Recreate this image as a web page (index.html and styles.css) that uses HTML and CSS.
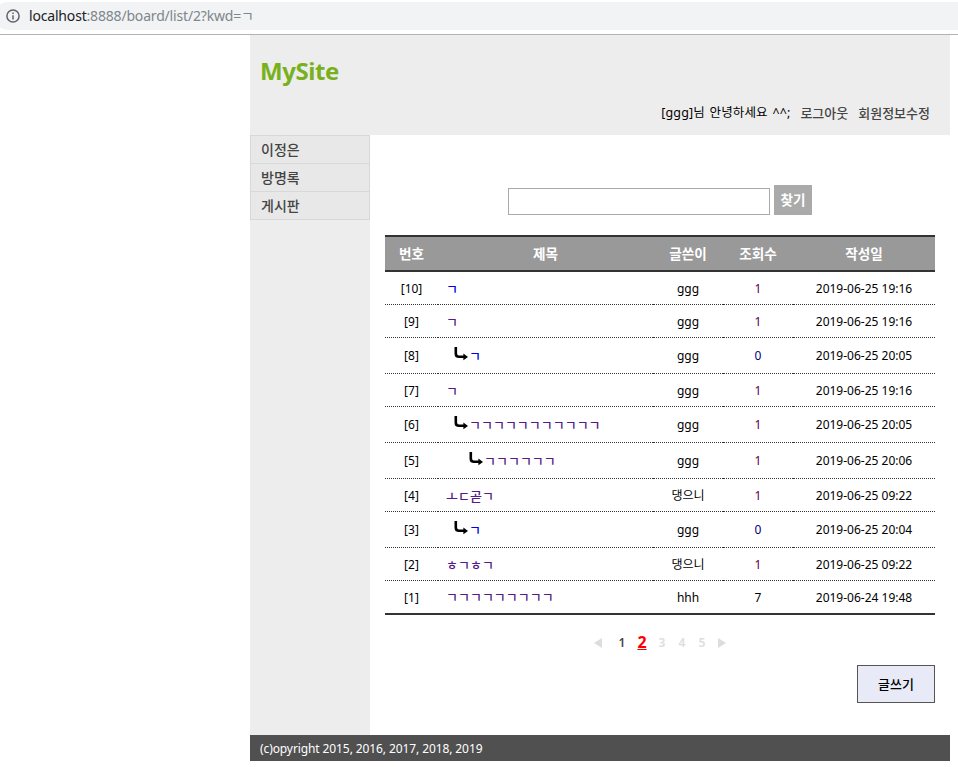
FILE: index.html
```html
<!DOCTYPE html>
<html lang="ko">
<head>
<meta charset="utf-8">
<title>MySite</title>
<link rel="stylesheet" href="styles.css">
</head>
<body>
<svg class="defs" width="0" height="0"><symbol id="reply" viewBox="0 0 14 14"><path d="M1.8 0V6.5Q1.8 9.8 5 9.8H10" fill="none" stroke="#000" stroke-width="2.6"/><path d="M9.4 6.6L14 9.9L9.4 13.2Z" fill="#000"/></symbol></svg>
<div class="browser-bar">
  <div class="address">
    <svg class="info" viewBox="0 0 14 14"><circle cx="7" cy="7" r="6.1" fill="none" stroke="#5f6368" stroke-width="1.5"/><path d="M7 6.2V10.4M7 3.5V5" stroke="#5f6368" stroke-width="1.5"/></svg>
    <span class="url"><span class="host">localhost</span>:8888/board/list/2?kwd=ㄱ</span>
  </div>
</div>
<div class="container">
  <header class="header">
    <h1>MySite</h1>
    <div class="user"><span class="greeting">[ggg]님 안녕하세요 ^^;</span><a>로그아웃</a><a>회원정보수정</a></div>
  </header>
  <div class="wrapper">
    <nav class="navigation"><ul><li>이정은</li><li>방명록</li><li>게시판</li></ul></nav>
    <main class="content">
      <form class="search"><input type="text"><button type="button">찾기</button></form>
      <table class="board">
        <colgroup><col class="no"><col class="title"><col class="writer"><col class="hit"><col class="date"></colgroup>
        <tr class="head"><th>번호</th><th>제목</th><th>글쓴이</th><th>조회수</th><th>작성일</th></tr>
        <tr><td>[10]</td><td class="subject"><a class="new">ㄱ</a></td><td>ggg</td><td class="seen">1</td><td>2019-06-25 19:16</td></tr>
        <tr><td>[9]</td><td class="subject"><a>ㄱ</a></td><td>ggg</td><td class="seen">1</td><td>2019-06-25 19:16</td></tr>
        <tr class="answer"><td>[8]</td><td class="subject depth1"><svg><use href="#reply"/></svg><a class="new">ㄱ</a></td><td>ggg</td><td class="unseen">0</td><td>2019-06-25 20:05</td></tr>
        <tr><td>[7]</td><td class="subject"><a>ㄱ</a></td><td>ggg</td><td class="seen">1</td><td>2019-06-25 19:16</td></tr>
        <tr class="answer"><td>[6]</td><td class="subject depth1"><svg><use href="#reply"/></svg><a>ㄱㄱㄱㄱㄱㄱㄱㄱㄱㄱㄱ</a></td><td>ggg</td><td class="seen">1</td><td>2019-06-25 20:05</td></tr>
        <tr class="answer"><td>[5]</td><td class="subject depth2"><svg><use href="#reply"/></svg><a>ㄱㄱㄱㄱㄱㄱ</a></td><td>ggg</td><td class="seen">1</td><td>2019-06-25 20:06</td></tr>
        <tr><td>[4]</td><td class="subject"><a>ㅗㄷ곧ㄱ</a></td><td>댕으니</td><td class="seen">1</td><td>2019-06-25 09:22</td></tr>
        <tr class="answer"><td>[3]</td><td class="subject depth1"><svg><use href="#reply"/></svg><a class="new">ㄱ</a></td><td>ggg</td><td class="unseen">0</td><td>2019-06-25 20:04</td></tr>
        <tr><td>[2]</td><td class="subject"><a>ㅎㄱㅎㄱ</a></td><td>댕으니</td><td class="seen">1</td><td>2019-06-25 09:22</td></tr>
        <tr class="last"><td>[1]</td><td class="subject"><a>ㄱㄱㄱㄱㄱㄱㄱㄱㄱ</a></td><td>hhh</td><td>7</td><td>2019-06-24 19:48</td></tr>
      </table>
      <ul class="pager">
        <li><svg viewBox="0 0 8 10"><path d="M8 0V10L0 5Z"/></svg></li><li class="on">1</li><li class="selected">2</li><li>3</li><li>4</li><li>5</li><li><svg viewBox="0 0 8 10"><path d="M0 0V10L8 5Z"/></svg></li>
      </ul>
      <div class="bottom"><a>글쓰기</a></div>
    </main>
  </div>
  <footer class="footer">(c)opyright 2015, 2016, 2017, 2018, 2019</footer>
</div>
</body>
</html>
```

FILE: styles.css
```css
* { box-sizing: border-box; }
body { margin: 0; background: #fff; color: #000; font: 12px/18px "Noto Sans", "Noto Sans CJK KR", sans-serif; overflow: hidden; }
ul { list-style: none; margin: 0; padding: 0; }
.defs { position: absolute; }
.browser-bar { height: 35px; padding-top: 2px; border-bottom: 1px solid #b3b3b3; }
.address { display: flex; align-items: center; height: 28px; margin-left: -6px; padding-left: 12px; background: #f1f3f4; border-radius: 14px 0 0 14px; }
.info { width: 14px; height: 14px; margin-right: 9px; }
.url { font-size: 14px; line-height: 20px; letter-spacing: -0.18px; color: #80868b; }
.host { color: #202124; }
.container { width: 700px; margin-left: 250px; }
.header { height: 100px; padding: 21px 20px 0 10px; background: #ededed; }
h1 { margin: 0; font-size: 24px; line-height: 30px; font-weight: 700; letter-spacing: -0.45px; color: #79b11d; }
.user { display: flex; justify-content: flex-end; margin-top: 18px; }
.greeting { letter-spacing: 0.1px; word-spacing: 1.5px; font-size: 12.5px; }
.user a { margin-left: 10px; font-size: 13px; font-weight: 500; color: #444; }
.wrapper { display: flex; height: 600px; }
.navigation { width: 120px; background: #ededed; }
.navigation ul { border: 1px solid #d8d8d8; border-top: 0; }
.navigation li { height: 28px; padding-left: 10px; border-top: 1px solid #d8d8d8; background: #e8e8e8; font-size: 14px; line-height: 27px; font-weight: 500; color: #444; }
.content { width: 580px; padding: 50px 15px 0; }
.search { display: flex; justify-content: center; align-items: flex-end; height: 30px; gap: 4px; margin-bottom: 20px; }
.search input { width: 262px; height: 27px; border: 1px solid #aaa; padding: 0; background: #fff; }
.search button { width: 38px; height: 30px; border: 0; padding: 0; background: #aaa; color: #fff; font: 700 13.6px/30px "Noto Sans", "Noto Sans CJK KR", sans-serif; }
.board { width: 550px; table-layout: fixed; border-spacing: 0; }
.no { width: 53px; } .title { width: 215px; } .writer, .hit { width: 70px; } .date { width: 142px; }
th { height: 37px; padding: 0; border-top: 2px solid #333; border-bottom: 2px solid #333; background: #999; color: #fff; font-size: 13.6px; font-weight: 700; }
td { height: 33px; padding: 2px 0 0; border-bottom: 1px dotted #333; text-align: center; line-height: 18px; }
.answer td { height: 36px; padding-top: 0; }
.last td { height: 34px; padding-top: 1px; border-bottom: 2px solid #333; }
td.subject { padding-left: 8px; text-align: left; }
.subject a { font-size: 13px; font-weight: 500; color: #551a8b; }
.subject a.new { color: #0000ee; }
td.depth1 { padding-left: 16px; }
td.depth2 { padding-left: 31px; }
.answer .subject { padding-top: 2px; }
.subject svg { width: 14px; height: 14px; margin-right: 1px; vertical-align: 0; }
.seen { color: #550055; }
.unseen { color: #000080; }
.pager { display: flex; justify-content: center; height: 20px; margin-top: 18px; }
.pager li { width: 20px; text-align: center; line-height: 20px; font-weight: 600; color: #ddd; }
.pager li:first-child { margin-right: 4px; }
.pager svg { width: 8px; height: 10px; fill: #ddd; vertical-align: -1px; }
.pager li.on { color: #444; }
.pager li.selected { font-size: 16px; line-height: 18px; font-weight: 700; color: #f00; text-decoration: underline; }
.bottom { display: flex; justify-content: flex-end; margin-top: 12px; }
.bottom a { width: 78px; height: 38px; border: 1px solid #555; background: #e8ebf7; text-align: center; font-size: 13px; line-height: 36px; font-weight: 500; }
.footer { height: 26px; padding: 1px 0 0 10px; background: #505050; color: #fff; line-height: 26px; letter-spacing: -0.1px; }
```
